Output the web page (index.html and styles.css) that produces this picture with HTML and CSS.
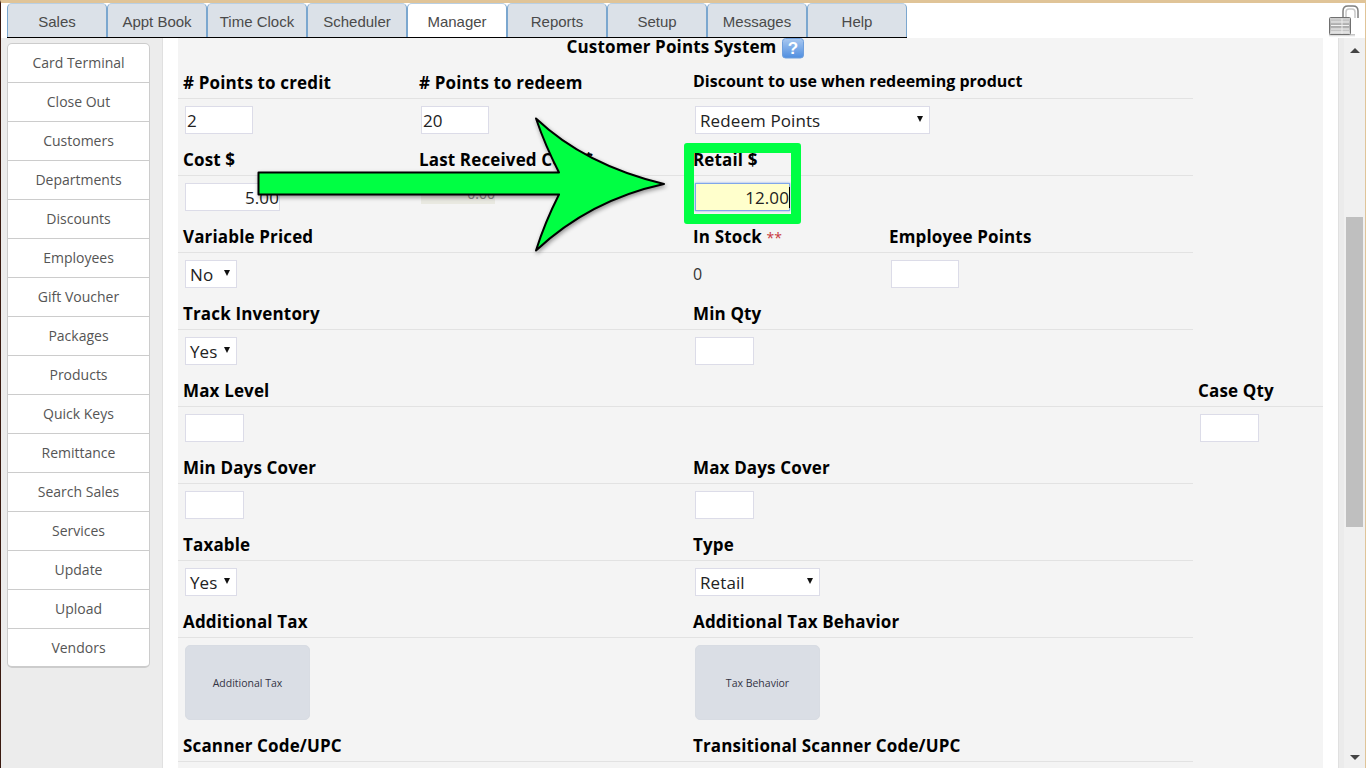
FILE: index.html
```html
<!DOCTYPE html>
<html lang="en">
<head>
<meta charset="utf-8">
<title>Manager</title>
<link rel="stylesheet" href="styles.css">
</head>
<body>
<div class="page">
  <header class="topbar">
    <nav class="tabs">
      <a class="tab">Sales</a>
      <a class="tab">Appt Book</a>
      <a class="tab">Time Clock</a>
      <a class="tab">Scheduler</a>
      <a class="tab active">Manager</a>
      <a class="tab">Reports</a>
      <a class="tab">Setup</a>
      <a class="tab">Messages</a>
      <a class="tab">Help</a>
    </nav>
    <svg class="lock" width="32" height="32" viewBox="0 0 32 32">
      <defs>
        <linearGradient id="lockbody" x1="0" y1="0" x2="0" y2="1">
          <stop offset="0" stop-color="#d4d4d4"/>
          <stop offset="0.5" stop-color="#a8a8a8"/>
          <stop offset="1" stop-color="#dedede"/>
        </linearGradient>
        <linearGradient id="lockshade" x1="0" y1="0" x2="0" y2="1">
          <stop offset="0" stop-color="#bbb"/>
          <stop offset="1" stop-color="#fff"/>
        </linearGradient>
      </defs>
      <rect x="1" y="29" width="26" height="3" fill="url(#lockshade)"/>
      <path d="M15 12V6Q15 1 20 1H25Q30 1 30 6V13" fill="none" stroke="#808080" stroke-width="1.500"/>
      <path d="M18 12V7Q18 4 21 4H24Q27 4 27 7V13" fill="none" stroke="#c8c8c8" stroke-width="1.500"/>
      <rect x="1.500" y="12.500" width="21" height="17" rx="1" fill="url(#lockbody)" stroke="#707070"/>
      <path d="M3 17H21M3 20.500H21M3 24H21M3 27H21" stroke="#f2f2f2" stroke-width="1"/>
      <path d="M14 13.500V29" stroke="#ececec" stroke-width="1"/>
    </svg>
  </header>
  <div class="body">
    <aside class="side">
      <ul class="menu">
        <li>Card Terminal</li>
        <li>Close Out</li>
        <li>Customers</li>
        <li>Departments</li>
        <li>Discounts</li>
        <li>Employees</li>
        <li>Gift Voucher</li>
        <li>Packages</li>
        <li>Products</li>
        <li>Quick Keys</li>
        <li>Remittance</li>
        <li>Search Sales</li>
        <li>Services</li>
        <li>Update</li>
        <li>Upload</li>
        <li>Vendors</li>
      </ul>
    </aside>
    <main class="main">
      <section class="form">
        <div class="title">
          <span>Customer Points System</span>
          <svg class="help" width="22" height="21" viewBox="0 0 22 21">
            <defs>
              <linearGradient id="helpbg" x1="0" y1="0" x2="0" y2="1">
                <stop offset="0" stop-color="#a9c8f0"/>
                <stop offset="1" stop-color="#4f8ee0"/>
              </linearGradient>
            </defs>
            <rect x="0.500" y="0.500" width="21" height="19.500" rx="3" fill="url(#helpbg)" stroke="#6f9fdc"/>
            <text x="11" y="16" text-anchor="middle" class="help-mark">?</text>
          </svg>
        </div>

        <div class="grid head"><b>#&nbsp;Points to credit</b><b># Points to redeem</b><b class="span2 small">Discount to use when redeeming product</b></div>
        <div class="grid vals">
          <input class="field w68" value="2">
          <input class="field w68" value="20">
          <div class="select w235 span2"><span>Redeem Points</span><i class="caret"></i></div>
        </div>

        <div class="grid head"><b>Cost $</b><b>Last Received Cost $</b><b class="span2">Retail $</b></div>
        <div class="grid vals">
          <input class="field num w95" value="5.00">
          <div class="readonly">0.00</div>
          <div class="focus-wrap span2"><input class="field num focused" value="12.00"><i class="text-caret"></i></div>
        </div>

        <div class="grid head"><b class="span2">Variable Priced</b><b>In Stock <em>**</em></b><b>Employee Points</b></div>
        <div class="grid vals">
          <div class="select w52 span2"><span>No</span><i class="caret"></i></div>
          <div class="plain">0</div>
          <input class="field w68" value="">
        </div>

        <div class="grid head"><b class="span2">Track Inventory</b><b class="span2">Min Qty</b></div>
        <div class="grid vals">
          <div class="select w52 span2"><span>Yes</span><i class="caret"></i></div>
          <input class="field w59 span2" value="">
        </div>

        <div class="grid head full"><b class="span4">Max Level</b><b>Case Qty</b></div>
        <div class="grid vals">
          <input class="field w59 span4" value="">
          <input class="field w59" value="">
        </div>

        <div class="grid head"><b class="span2">Min Days Cover</b><b class="span2">Max Days Cover</b></div>
        <div class="grid vals">
          <input class="field w59 span2" value="">
          <input class="field w59 span2" value="">
        </div>

        <div class="grid head"><b class="span2">Taxable</b><b class="span2">Type</b></div>
        <div class="grid vals">
          <div class="select w52 span2"><span>Yes</span><i class="caret"></i></div>
          <div class="select w125 span2"><span>Retail</span><i class="caret"></i></div>
        </div>

        <div class="grid head"><b class="span2">Additional Tax</b><b class="span2">Additional Tax Behavior</b></div>
        <div class="grid vals tall">
          <button class="tile span2">Additional Tax</button>
          <button class="tile span2">Tax Behavior</button>
        </div>

        <div class="grid head"><b class="span2">Scanner Code/UPC</b><b class="span2">Transitional Scanner Code/UPC</b></div>
      </section>
    </main>
    <div class="gutter"></div>
    <div class="scrollbar">
      <i class="arrow-up"></i>
      <div class="thumb"></div>
      <i class="arrow-down"></i>
    </div>
  </div>
</div>

<div class="highlight"></div>
<svg class="callout" width="420" height="140" viewBox="254 114 420 140">
  <path d="M258.500 172.500H559Q545 145 536 118.500Q585 165 664 184Q590 200 536 250.500Q545 222 559 194.500H258.500Z" fill="#00ff43" stroke="#000" stroke-width="2" stroke-linejoin="round"/>
</svg>
</body>
</html>
```

FILE: styles.css
```css
* { box-sizing: border-box; }
html, body { margin: 0; height: 100%; overflow: hidden; }
body {
  position: relative;
  background: #fff;
  font-family: "Open Sans", sans-serif;
  color: #000;
}
.page {
  display: flex;
  flex-direction: column;
  height: 768px;
  border-top: 3px solid #e0c498;
  border-left: 1px solid #3a1a10;
  border-right: 1px solid #e0c498;
}
.topbar {
  display: flex;
  height: 35px;
  padding-left: 6px;
  background: #fff;
  flex: none;
}
.tabs {
  display: flex;
  height: 35px;
  border-bottom: 1px solid #000;
}
.tab {
  width: 100px;
  display: flex;
  align-items: center;
  justify-content: center;
  background: #dbe1e8;
  border: 1px solid #7ba7cf;
  border-bottom: 0;
  border-top-color: #b9cfe3;
  border-radius: 5px 5px 0 0;
  font: 15px "Liberation Sans", Arial, sans-serif;
  color: #4a4a4a;
  padding-top: 2px;
}
.tab.active { background: #fff; }
.lock { margin: 2px 5px 0 auto; }
.body { display: flex; flex: 1; min-height: 0; }
.side {
  width: 162px;
  flex: none;
  padding: 5px 12px 0 6px;
  background: #ececec;
  border-right: 1px solid #e0e0e0;
}
.menu {
  list-style: none;
  margin: 0;
  padding: 0;
  background: #fff;
  border: 1px solid #ccc;
  border-bottom-width: 2px;
  border-radius: 5px;
  width: 143px;
}
.menu li {
  height: 39px;
  border-bottom: 1px solid #ccc;
  text-align: center;
  font-size: 14px;
  line-height: 38px;
  color: #555;
}
.menu li:last-child { border-bottom: 0; height: 37px; line-height: 37px; }
.main { flex: 1; min-width: 0; padding: 0 15px; background: #fff; }
.form { width: 1145px; height: 100%; background: #f4f4f4; }
.title {
  width: 1015px;
  height: 22px;
  display: flex;
  justify-content: center;
  align-items: flex-start;
  gap: 6px;
  font-size: 17px;
  font-weight: 700;
  line-height: 18px;
  letter-spacing: 0.15px;
}
.help { flex: none; }
.help-mark {
  fill: #fff;
  font: 700 17px "Liberation Sans", Arial, sans-serif;
}
.grid {
  display: grid;
  grid-template-columns: 236px 274px 196px 309px 130px;
}
.span2 { grid-column: span 2; }
.span4 { grid-column: span 4; }
.head {
  width: 1015px;
  grid-template-columns: 236px 274px 196px 309px;
  height: 39px;
  align-items: end;
  padding: 0 0 4px 5px;
  border-bottom: 1px solid #e2e2e2;
  font-size: 17px;
  line-height: 22px;
  letter-spacing: 0.15px;
}
.head .small { margin-bottom: 2px; font-size: 16px; letter-spacing: 0; }
.head.full { width: 100%; grid-template-columns: 236px 274px 196px 309px 130px; }
.head em { font-style: normal; font-weight: 400; font-size: 14px; line-height: 1; color: #c8383c; letter-spacing: 0; }
.vals { height: 38px; padding: 7px 0 0 7px; align-items: start; }
.vals.tall { height: 85px; }
.field {
  display: block;
  height: 28px;
  margin: 0;
  padding: 0 0 0 1px;
  background: #fff;
  border: 1px solid #dcdce8;
  border-radius: 0;
  outline: 0;
  font: 17px "Open Sans", sans-serif;
  letter-spacing: 0.1px;
  color: #222;
}
.w52 { width: 52px; }
.w59 { width: 59px; }
.w68 { width: 68px; }
.w95 { width: 95px; }
.w125 { width: 125px; }
.w235 { width: 235px; }
.num { text-align: right; }
.select {
  height: 28px;
  padding: 0 6px 0 4px;
  display: flex;
  align-items: center;
  justify-content: space-between;
  background: #fff;
  border: 1px solid #dcdce8;
  font-size: 17px;
  letter-spacing: 0.1px;
  color: #222;
}
.caret {
  width: 0;
  height: 0;
  margin-bottom: 3px;
  border-left: 3.500px solid transparent;
  border-right: 3.500px solid transparent;
  border-top: 6px solid #111;
}
.plain { margin-left: -2px; font-size: 16px; line-height: 28px; color: #333; }
.readonly {
  width: 74px;
  height: 21px;
  background: #e9e9e1;
  text-align: right;
  font-size: 14px;
  line-height: 21px;
  color: #888;
}
.focus-wrap { position: relative; width: 95px; height: 28px; }
.focused { width: 95px; background: #ffffcc; border: 1px solid #7fa6ea; box-shadow: 0 0 2px #7fa6ea; }
.text-caret { position: absolute; right: 0; top: 4px; width: 1px; height: 21px; background: #000; }
.tile {
  display: flex;
  align-items: center;
  justify-content: center;
  width: 125px;
  height: 75px;
  padding: 0;
  background: #dadee5;
  border: 1px solid #d8dce3;
  border-radius: 5px;
  font: 10.500px "Open Sans", sans-serif;
  color: #334;
}
.gutter { width: 6px; flex: none; background: #ebebeb; border-left: 1px solid #e0e0e0; }
.scrollbar {
  width: 21px;
  flex: none;
  display: flex;
  flex-direction: column;
  align-items: center;
  background: #f0f0f0;
  padding-top: 10px;
}
.arrow-up, .arrow-down { width: 0; height: 0; border-left: 5px solid transparent; border-right: 5px solid transparent; }
.arrow-up { border-bottom: 5px solid #444; }
.arrow-down { border-top: 5px solid #444; margin-top: auto; margin-bottom: 8px; }
.thumb { width: 17px; height: 310px; margin: 164px 0 0 -1px; background: #bfbfbf; }
.highlight {
  position: absolute;
  left: 684px;
  top: 143px;
  width: 117px;
  height: 81px;
  border: 10px solid #00ff43;
  border-radius: 3px;
  pointer-events: none;
}
.callout {
  position: absolute;
  left: 254px;
  top: 114px;
  overflow: visible;
  filter: drop-shadow(1px 2px 2px rgba(0, 0, 0, 0.4));
  pointer-events: none;
}
```
